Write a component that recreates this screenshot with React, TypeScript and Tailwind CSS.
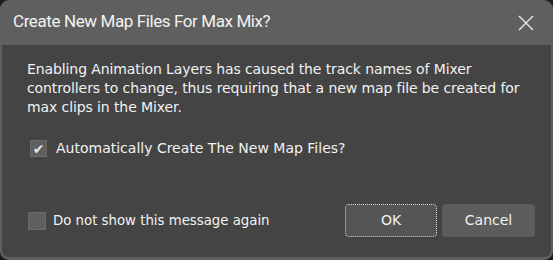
export default function App() {
  return (
    <div className="w-[553px] h-[260px] bg-[#1c1c1c]">
      <div className="w-full h-full rounded-[9px] bg-[#5f5f5f] flex flex-col px-[2px] pb-[3px] overflow-hidden">
        <div className="h-[45px] flex items-center justify-between pl-[11px] pr-[10px] shrink-0">
          <h1 className="text-[#f2f2f2] text-[17px] tracking-[-0.4px] font-['Roboto',sans-serif] leading-none -mt-[2px]">
            Create New Map Files For Max Mix?
          </h1>
          <button className="w-[30px] h-[30px] flex items-center justify-center text-[#eeeeee]">
            <svg width="16" height="16" viewBox="0 0 16 16" fill="none" stroke="currentColor" strokeWidth="1.3">
              <path d="M1 1L15 15M15 1L1 15" />
            </svg>
          </button>
        </div>
        <div className="flex-1 bg-[#444444] rounded-b-[7px] flex flex-col px-[25px] pt-[15px] font-['DejaVu_Sans',sans-serif] text-[#f2f2f2] text-[14px] leading-[19px]">
          <p className="tracking-[-0.1px]">
            Enabling Animation Layers has caused the track names of Mixer
            controllers to change, thus requiring that a new map file be created for
            max clips in the Mixer.
          </p>
          <label className="flex items-center gap-[9px] mt-[22px] ml-[3px]">
            <span className="w-[17px] h-[17px] bg-[#5f5f5f] border border-[#6a6a6a] flex items-center justify-center text-[#e6e6e6] text-[14px] leading-none">
              ✔
            </span>
            <span>Automatically Create The New Map Files?</span>
          </label>
          <div className="flex items-center justify-between mt-auto mb-[20px]">
            <label className="flex items-center gap-[7px] ml-[1px] text-[13.3px]">
              <span className="w-[18px] h-[18px] bg-[#5f5f5f] border border-[#6a6a6a]" />
              <span>Do not show this message again</span>
            </label>
            <div className="flex gap-[5px] mr-[-9px]">
              <button className="w-[92px] h-[33px] rounded-[4px] bg-[#555555] border border-dotted border-[#d0d0d0] text-[#f2f2f2] text-[14px]">
                OK
              </button>
              <button className="w-[93px] h-[33px] rounded-[4px] bg-[#5c5c5c] text-[#f2f2f2] text-[14px]">
                Cancel
              </button>
            </div>
          </div>
        </div>
      </div>
    </div>
  );
}
